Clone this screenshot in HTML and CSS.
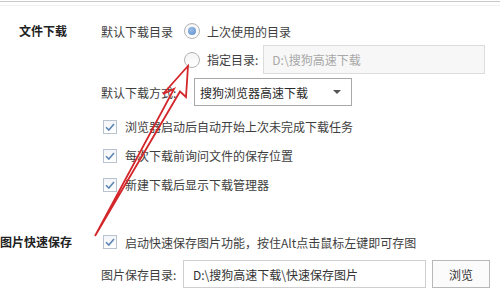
FILE: index.html
```html
<!DOCTYPE html>
<html lang="zh">
<head>
<meta charset="utf-8">
<link rel="stylesheet" href="styles.css">
</head>
<body>
<div class="page">
  <div class="topline"></div>

  <div class="section s1">
    <div class="title">文件下载</div>
    <div class="body">
      <div class="row r1">
        <span class="sub w-dir">默认下载目录</span>
        <span class="radio on"></span>
        <span class="rtext">上次使用的目录</span>
      </div>
      <div class="row r2">
        <span class="sub w-dir"></span>
        <span class="radio"></span>
        <span class="rtext gap5">指定目录:</span>
        <div class="input dis w-path">D:\搜狗高速下载</div>
      </div>
      <div class="row r3">
        <span class="sub w-mode">默认下载方式:</span>
        <div class="select">
          <span>搜狗浏览器高速下载</span>
          <span class="caret"></span>
        </div>
      </div>
      <div class="row chk first">
        <span class="check"><svg viewBox="0 0 14 14" width="14" height="14"><path d="M3 7.2 L5.8 10 L11 4" fill="none" stroke="#5f86b3" stroke-width="1.6"/></svg></span>
        <span class="ctext">浏览器启动后自动开始上次未完成下载任务</span>
      </div>
      <div class="row chk">
        <span class="check"><svg viewBox="0 0 14 14" width="14" height="14"><path d="M3 7.2 L5.8 10 L11 4" fill="none" stroke="#5f86b3" stroke-width="1.6"/></svg></span>
        <span class="ctext">每次下载前询问文件的保存位置</span>
      </div>
      <div class="row chk">
        <span class="check"><svg viewBox="0 0 14 14" width="14" height="14"><path d="M3 7.2 L5.8 10 L11 4" fill="none" stroke="#5f86b3" stroke-width="1.6"/></svg></span>
        <span class="ctext">新建下载后显示下载管理器</span>
      </div>
    </div>
  </div>

  <div class="section s2">
    <div class="title">图片快速保存</div>
    <div class="body">
      <div class="row chk">
        <span class="check"><svg viewBox="0 0 14 14" width="14" height="14"><path d="M3 7.2 L5.8 10 L11 4" fill="none" stroke="#5f86b3" stroke-width="1.6"/></svg></span>
        <span class="ctext">启动快速保存图片功能，按住Alt点击鼠标左键即可存图</span>
      </div>
      <div class="row r3">
        <span class="sub w-img">图片保存目录:</span>
        <div class="input w-img-path">D:\搜狗高速下载\快速保存图片</div>
        <button class="btn">浏览</button>
      </div>
    </div>
  </div>

  <svg class="arrow" viewBox="0 0 500 291" width="500" height="291">
    <path d="M188 66 L186 97 L180 91.5 L95 236 L174 89 L163 94 Z" fill="none" stroke="#d3272b" stroke-width="1.8" stroke-linejoin="miter"/>
  </svg>
</div>
</body>
</html>
```

FILE: styles.css
```css
html, body {
  margin: 0;
  padding: 0;
  background: #ffffff;
}

.page {
  position: relative;
  width: 500px;
  height: 291px;
  overflow: hidden;
  font-family: "Noto Sans CJK SC", "Noto Sans", sans-serif;
  font-size: 12px;
  color: #3e3e3e;
}

.topline {
  height: 1px;
  margin-top: 1px;
  background: #c9c9c9;
  box-shadow: 0 4px 0 #f1f1f1;
}

.section {
  display: grid;
  grid-template-columns: 67px 1fr;
  column-gap: 34px;
}

.s1 { margin-top: 15px; }
.s2 { margin-top: 29px; }

.title {
  text-align: right;
  white-space: nowrap;
  font-weight: bold;
  color: #222;
  height: 28px;
  line-height: 28px;
}

.body {
  display: flex;
  flex-direction: column;
}

.row {
  display: flex;
  align-items: center;
  white-space: nowrap;
}

.r1 { height: 28px; }
.r2 { height: 29px; }
.r3 { height: 28px; margin-top: 4px; }
.chk { height: 29px; }
.chk.first { margin-top: 6px; }
.s2 .chk { height: 28px; }

.sub { flex: none; }
.w-dir { width: 83px; }
.w-mode { width: 93px; }
.w-img { width: 82px; }

.radio {
  flex: none;
  width: 14px;
  height: 14px;
  border: 1px solid #b3b3b3;
  border-radius: 50%;
  background: linear-gradient(#f4f4f4, #ffffff);
  display: flex;
  align-items: center;
  justify-content: center;
  margin-right: 7px;
}

.radio.on::after {
  content: "";
  width: 8px;
  height: 8px;
  border-radius: 50%;
  background: radial-gradient(circle at 40% 35%, #9cbde6, #5a8ccb);
}

.rtext { flex: none; }
.gap5 { margin-right: 5px; }

.input {
  box-sizing: border-box;
  height: 29px;
  line-height: 27px;
  border: 1px solid #d4d4d4;
  padding: 0 8px;
  color: #333;
  flex: none;
}

.input.dis {
  background: #f7f7f7;
  color: #a8a8a8;
  border-color: #dcdcdc;
}

.w-path { width: 222px; }
.w-img-path { width: 243px; height: 28px; padding-left: 9px; border-color: #cfcfcf; }

.select {
  box-sizing: border-box;
  width: 158px;
  height: 28px;
  border: 1px solid #a8a8a8;
  display: flex;
  align-items: center;
  justify-content: space-between;
  padding: 0 10px 0 5px;
  color: #2a2a2a;
}

.caret {
  width: 0;
  height: 0;
  border-left: 4px solid transparent;
  border-right: 4px solid transparent;
  border-top: 4px solid #555;
}

.check {
  flex: none;
  box-sizing: border-box;
  width: 14px;
  height: 14px;
  border: 1px solid #b9c3cf;
  background: linear-gradient(#f3f5f8, #ffffff);
  margin-left: 2px;
  margin-right: 8px;
  display: flex;
  align-items: center;
  justify-content: center;
}

.check svg {
  display: block;
  flex: none;
}

.ctext { flex: none; }

.btn {
  box-sizing: border-box;
  width: 58px;
  height: 28px;
  margin-left: 6px;
  border: 1px solid #b8b8b8;
  background: #fbfbfb;
  font-family: inherit;
  font-size: 12px;
  color: #333;
  padding: 0;
}

.arrow {
  position: absolute;
  left: 0;
  top: 0;
  pointer-events: none;
}
```
